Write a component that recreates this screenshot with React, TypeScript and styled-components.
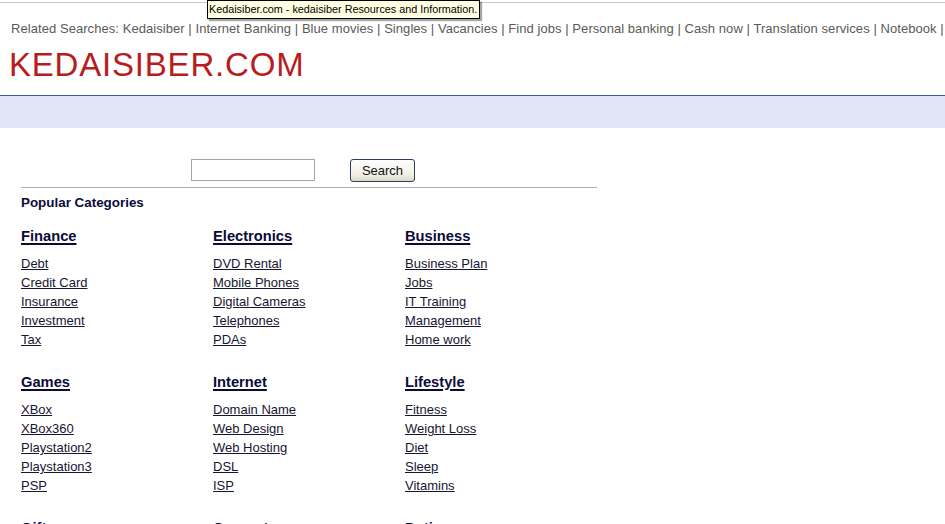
import React, {FC} from "react";
import styled, {createGlobalStyle} from "styled-components";

const navy = '#0b0b3a'
const linkColor = '#161630'

const GlobalStyle = createGlobalStyle`
  html, body {
    margin: 0;
    padding: 0;
    background: #fff;
    font-family: "Liberation Sans", Arial, sans-serif;
  }
`
const Page = styled.div`
  position: relative;
  width: 945px;
  height: 524px;
  overflow: hidden;
`
const TopEdge = styled.div`
  height: 2px;
  border-bottom: 1px solid #c9c9c9;
`
const Related = styled.div`
  margin-top: 18px;
  padding-left: 11px;
  font-size: 13px;
  line-height: 16px;
  letter-spacing: 0.06px;
  color: #5a5a5a;
  white-space: nowrap;
`
const Logo = styled.div`
  margin-top: 11px;
  padding-left: 9px;
  font-size: 33px;
  line-height: 33px;
  letter-spacing: 0.8px;
  color: #b81c1c;
`
const Band = styled.div`
  margin-top: 14px;
  height: 32px;
  border-top: 1px solid #3b5a98;
  background: #e0e6f6;
`
const Main = styled.div`
  width: 576px;
  margin-left: 21px;
`
const SearchRow = styled.form`
  display: flex;
  align-items: flex-start;
  margin-top: 31px;
  padding-left: 170px;
`
const SearchInput = styled.input`
  box-sizing: border-box;
  width: 124px;
  height: 22px;
  border: 1px solid #9ea7ae;
  padding: 0 3px;
  margin: 0;
`
const SearchButton = styled.button`
  box-sizing: border-box;
  margin-left: 35px;
  width: 65px;
  height: 23px;
  padding: 0;
  border: 1px solid #2d3f5c;
  border-radius: 3px;
  background: linear-gradient(#fefefe, #f1efe6 70%, #dcd8c8);
  font-family: "Liberation Sans", Arial, sans-serif;
  font-size: 13px;
  color: #111;
`
const Divider = styled.div`
  margin-top: 5px;
  border-top: 1px solid #a9b2ae;
`
const Popular = styled.div`
  margin-top: 7px;
  font-size: 13.4px;
  line-height: 16px;
  font-weight: bold;
  color: ${navy};
`
const Grid = styled.div`
  display: grid;
  grid-template-columns: repeat(3, 192px);
  row-gap: 24px;
  margin-top: 16px;
`
const Category = styled.div`
  display: flex;
  flex-direction: column;
  align-items: flex-start;
`
const CategoryTitle = styled.a`
  font-size: 14.7px;
  line-height: 18px;
  font-weight: bold;
  color: ${navy};
  text-decoration: underline;
  text-decoration-thickness: 2px;
  text-underline-offset: 2px;
  margin-bottom: 9px;
`
const CategoryLink = styled.a`
  font-size: 13px;
  line-height: 19px;
  color: ${linkColor};
  text-decoration: underline;
  text-underline-offset: 1px;
`
const Tooltip = styled.div`
  position: absolute;
  left: 207px;
  top: 0;
  height: 17px;
  padding: 0 2px 0 1px;
  border: 1px solid #000;
  background: #ffffe1;
  font-size: 10.8px;
  line-height: 17px;
  color: #000;
  white-space: nowrap;
  box-shadow: 2px 2px 1px rgba(0, 0, 0, 0.35);
`

const relatedSearches = ['Kedaisiber', 'Internet Banking', 'Blue movies', 'Singles', 'Vacancies', 'Find jobs',
  'Personal banking', 'Cash now', 'Translation services', 'Notebook']

interface CategoryData {
  title: string
  links: string[]
}
const categories: CategoryData[] = [
  {title: 'Finance', links: ['Debt', 'Credit Card', 'Insurance', 'Investment', 'Tax']},
  {title: 'Electronics', links: ['DVD Rental', 'Mobile Phones', 'Digital Cameras', 'Telephones', 'PDAs']},
  {title: 'Business', links: ['Business Plan', 'Jobs', 'IT Training', 'Management', 'Home work']},
  {title: 'Games', links: ['XBox', 'XBox360', 'Playstation2', 'Playstation3', 'PSP']},
  {title: 'Internet', links: ['Domain Name', 'Web Design', 'Web Hosting', 'DSL', 'ISP']},
  {title: 'Lifestyle', links: ['Fitness', 'Weight Loss', 'Diet', 'Sleep', 'Vitamins']},
  {title: 'Gifts', links: ['Flowers', 'Jewelry', 'Toys', 'Books', 'Perfume']},
  {title: 'Computers', links: ['Laptops', 'Software', 'Printers', 'Memory', 'Monitors']},
  {title: 'Dating', links: ['Singles', 'Romance', 'Personals', 'Chat', 'Wedding']},
]

const App: FC = () => {
  return (
    <Page>
      <GlobalStyle/>
      <TopEdge/>
      <Related>
        Related Searches: {relatedSearches.map(s => s + ' | ').join('')}
      </Related>
      <Logo>KEDAISIBER.COM</Logo>
      <Band/>
      <Main>
        <SearchRow onSubmit={e => e.preventDefault()}>
          <SearchInput type="text"/>
          <SearchButton type="submit">Search</SearchButton>
        </SearchRow>
        <Divider/>
        <Popular>Popular Categories</Popular>
        <Grid>
          {categories.map(category => (
            <Category key={category.title}>
              <CategoryTitle href="#">{category.title}</CategoryTitle>
              {category.links.map(link => (
                <CategoryLink key={link} href="#">{link}</CategoryLink>
              ))}
            </Category>
          ))}
        </Grid>
      </Main>
      <Tooltip>Kedaisiber.com - kedaisiber Resources and Information.</Tooltip>
    </Page>
  )
}

export default App
